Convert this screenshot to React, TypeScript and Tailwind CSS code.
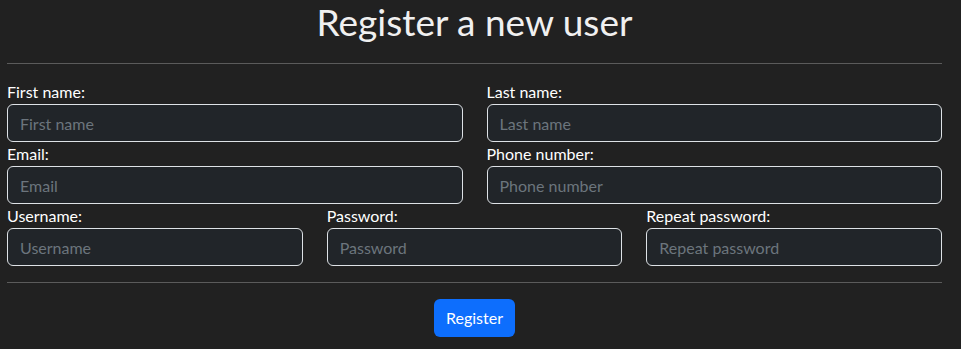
const Field = ({ label, placeholder, type = 'text' }: { label: string; placeholder: string; type?: string }) => (
  <div className="flex flex-col">
    <label className="h-6 text-[16px] leading-6 text-white">{label}</label>
    <input
      type={type}
      placeholder={placeholder}
      className="h-[38px] w-full rounded-[6px] border border-[#dee2e6] bg-[#212529] px-3 text-[16px] text-[#dee2e6] outline-none placeholder:text-[#6c757d]"
    />
  </div>
)

export default function App() {
  return (
    <div className="min-h-screen bg-[#212121] font-['Lato',sans-serif] text-[#dee2e6]">
      <div className="w-[942px] pl-[7px]">
        <h1 className="h-[52px] text-center text-[37px] leading-[44px] font-normal text-[#f0f0f0]">
          Register a new user
        </h1>
        <hr className="mt-[11px] border-t border-[#5b5b5b]" />

        <div className="mt-4 grid grid-cols-2 gap-x-6">
          <Field label="First name:" placeholder="First name" />
          <Field label="Last name:" placeholder="Last name" />
          <Field label="Email:" placeholder="Email" type="email" />
          <Field label="Phone number:" placeholder="Phone number" />
        </div>
        <div className="grid grid-cols-3 gap-x-6">
          <Field label="Username:" placeholder="Username" />
          <Field label="Password:" placeholder="Password" type="password" />
          <Field label="Repeat password:" placeholder="Repeat password" type="password" />
        </div>

        <hr className="mt-4 border-t border-[#5b5b5b]" />

        <div className="mt-4 flex justify-center">
          <button className="h-[38px] rounded-[6px] bg-[#0d6efd] px-3 text-[16px] text-white">Register</button>
        </div>
      </div>
    </div>
  )
}
